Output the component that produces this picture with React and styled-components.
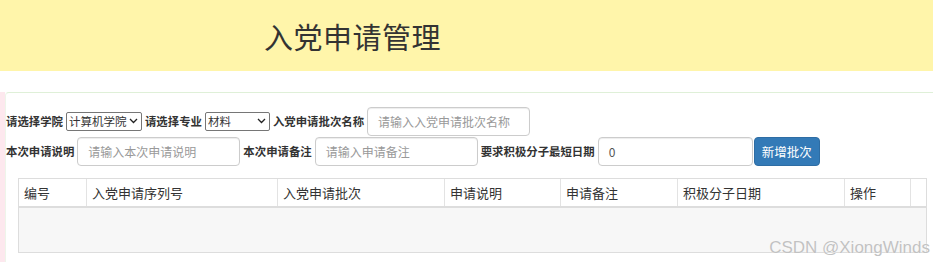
import React from 'react';
import styled, { createGlobalStyle } from 'styled-components';

const GlobalStyle = createGlobalStyle`
  html, body {
    margin: 0;
    padding: 0;
    background: #fff;
  }
  body {
    font-family: "Noto Sans CJK SC", "Liberation Sans", sans-serif;
    color: #333;
    overflow: hidden;
  }
  * {
    box-sizing: border-box;
  }
`;

const Page = styled.div`
  position: relative;
  width: 936px;
  height: 262px;
`;

const Header = styled.header`
  height: 71px;
  width: 933px;
  background: #fff5aa;
  display: flex;
  align-items: center;
  padding-left: 264px;
`;

const Title = styled.h1`
  margin: 0;
  font-size: 29px;
  font-weight: 400;
  color: #333;
  letter-spacing: 0.5px;
`;

const Body = styled.div`
  display: flex;
  margin-top: 21px;
  height: 170px;
`;

const SideStrip = styled.div`
  width: 5px;
  background: #fde8ee;
`;

const Panel = styled.section`
  flex: 1;
  margin-right: 3px;
  border-top: 1px solid #dff0d8;
  border-left: 1px solid #eef5ea;
  border-radius: 4px 0 0 0;
  padding: 13px 0 0 0;
`;

const FormRow = styled.div`
  display: flex;
  align-items: center;
  gap: 3px;
  height: 30px;
`;

const Label = styled.label`
  font-size: 11.4px;
  font-weight: 700;
  color: #333;
  white-space: nowrap;
`;

const Select = styled.div`
  display: flex;
  align-items: center;
  justify-content: space-between;
  flex-shrink: 0;
  width: ${p => p.$width}px;
  height: 19px;
  border: 1px solid #767676;
  border-radius: 2px;
  padding: 0 3px 0 2px;
  font-size: 11.5px;
  color: #333;
  background: #fff;
  white-space: nowrap;
  overflow: hidden;
`;

const Chevron = () => (
  <svg width="9" height="6" viewBox="0 0 9 6" style={{ flexShrink: 0 }}>
    <path d="M1 1 L4.5 4.5 L8 1" fill="none" stroke="#222" strokeWidth="1.3" />
  </svg>
);

const Input = styled.div`
  display: flex;
  align-items: center;
  flex-shrink: 0;
  width: ${p => p.$width}px;
  height: ${p => p.$height || 29}px;
  border: 1px solid #ccc;
  border-radius: 4px;
  box-shadow: inset 0 1px 1px rgba(0, 0, 0, 0.075);
  padding: 0 10px;
  font-size: 12px;
  color: ${p => p.$value ? '#555' : '#999'};
  background: #fff;
  white-space: nowrap;
`;

const Button = styled.button`
  height: 29px;
  width: 66px;
  margin-left: -2px;
  border: 1px solid #2e6da4;
  border-radius: 4px;
  background: #337ab7;
  color: #fff;
  font-family: inherit;
  font-size: 12.5px;
  padding: 0;
`;

const Table = styled.div`
  margin: 12px 0 0 12px;
  width: 909px;
  border: 1px solid #ddd;
`;

const HeadRow = styled.div`
  display: grid;
  grid-template-columns: 67px 191px 167px 116px 117px 167px 66px 1fr;
  height: 29px;
  border-bottom: 2px solid #ddd;
`;

const HeadCell = styled.div`
  display: flex;
  align-items: center;
  padding-left: 5px;
  font-size: 13px;
  color: #333;
  border-left: ${p => p.$first ? 'none' : '1px solid #e3e3e3'};
`;

const EmptyBody = styled.div`
  height: 44px;
  background: #f7f7f7;
`;

const Watermark = styled.div`
  position: absolute;
  right: 6px;
  bottom: 4px;
  font-family: "Liberation Sans", sans-serif;
  font-size: 17px;
  color: #c2c2c2;
  text-shadow: 0 0 1px #fff;
`;

const columns = ['编号', '入党申请序列号', '入党申请批次', '申请说明', '申请备注', '积极分子日期', '操作', ''];

export default function App() {
  return (
    <Page>
      <GlobalStyle />
      <Header>
        <Title>入党申请管理</Title>
      </Header>
      <Body>
        <SideStrip />
        <Panel>
          <FormRow>
            <Label>请选择学院</Label>
            <Select $width={76}>计算机学院<Chevron /></Select>
            <Label>请选择专业</Label>
            <Select $width={65}>材料<Chevron /></Select>
            <Label>入党申请批次名称</Label>
            <Input $width={163}>请输入入党申请批次名称</Input>
          </FormRow>
          <FormRow>
            <Label>本次申请说明</Label>
            <Input $width={163}>请输入本次申请说明</Input>
            <Label>本次申请备注</Label>
            <Input $width={163}>请输入申请备注</Input>
            <Label>要求积极分子最短日期</Label>
            <Input $width={155} $value>0</Input>
            <Button>新增批次</Button>
          </FormRow>
          <Table>
            <HeadRow>
              {columns.map((c, i) => (
                <HeadCell key={i} $first={i === 0}>{c}</HeadCell>
              ))}
            </HeadRow>
            <EmptyBody />
          </Table>
        </Panel>
      </Body>
      <Watermark>CSDN @XiongWinds</Watermark>
    </Page>
  );
}
